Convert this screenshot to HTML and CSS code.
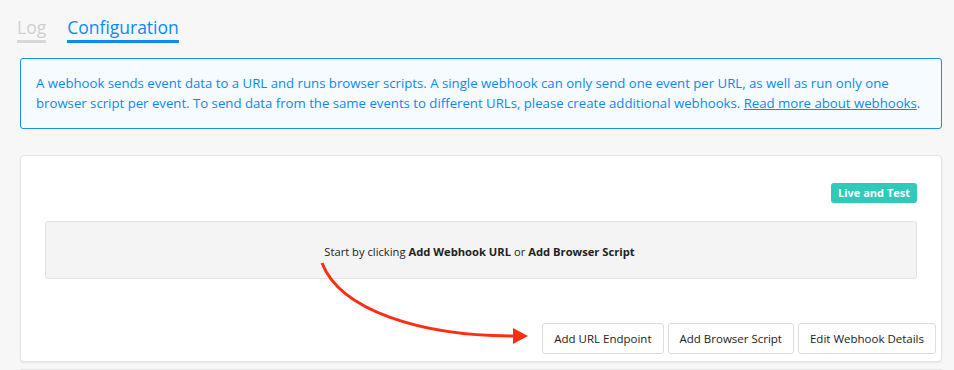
FILE: index.html
```html
<!DOCTYPE html>
<html lang="en">
<head>
  <meta charset="UTF-8" />
  <title>Webhook Configuration</title>
  <link rel="stylesheet" href="styles.css">
</head>
<body>
  <div class="tabs">
    <a class="tab">Log</a>
    <a class="tab active">Configuration</a>
  </div>

  <div class="info">
    A webhook sends event data to a URL and runs browser scripts. A single webhook can only send one event per URL, as well as run only one
    browser script per event. To send data from the same events to different URLs, please create additional webhooks. <a href="#">Read more about webhooks</a>.
  </div>

  <div class="card">
    <div class="card-top">
      <span class="badge">Live and Test</span>
    </div>
    <div class="empty">
      Start by clicking <strong>Add Webhook URL</strong> or <strong>Add Browser Script</strong>
    </div>
    <div class="actions">
      <button>Add URL Endpoint</button>
      <button>Add Browser Script</button>
      <button>Edit Webhook Details</button>
    </div>
    <svg class="arrow" width="240" height="100" viewBox="300 250 240 100">
      <path d="M322,263 C340,310 420,336 514,336" fill="none" stroke="#ff2d14" stroke-width="3" />
      <polygon points="513,328 528,336 513,344" fill="#ff2d14" />
    </svg>
  </div>

  <div class="card next"></div>
</body>
</html>
```

FILE: styles.css
```css
html {
  overflow: hidden;
}
body {
  margin: 0;
  padding: 0 12px 0 20px;
  background: #f7f7f7;
  font-family: 'Open Sans', sans-serif;
  overflow: hidden;
}
.tabs {
  display: flex;
  gap: 21px;
  padding: 14px 0 0 0;
  margin-left: -3px;
}
.tab {
  font-size: 17.5px;
  font-weight: 500;
  line-height: 26px;
  color: #d0d0d0;
  border-bottom: 3px solid #d8d8d8;
}
.tab.active {
  color: #0a8af4;
  border-color: #0a8af4;
}
.info {
  margin-top: 15px;
  padding: 14px 6px 15px 15px;
  background: #f5fbff;
  border: 1px solid #1b8ef2;
  border-radius: 3px;
  color: #0a8af4;
  font-size: 13.2px;
  line-height: 20px;
}
.info a {
  color: #0a8af4;
}
.card {
  position: relative;
  margin-top: 26px;
  background: #fff;
  border: 1px solid #e4e4e4;
  border-radius: 4px;
  box-shadow: 0 1px 2px rgba(0, 0, 0, 0.08);
  padding: 27px 5px 7px 24px;
}
.card-top {
  display: flex;
  justify-content: flex-end;
  padding-right: 19px;
}
.badge {
  background: #2ecbbb;
  color: #fff;
  font-size: 11px;
  font-weight: bold;
  line-height: 20px;
  padding: 0 7px;
  border-radius: 3px;
}
.empty {
  margin: 18px 19px 0 0;
  height: 54px;
  background: #f4f4f4;
  border: 1px solid #e2e2e2;
  border-radius: 3px;
  display: flex;
  align-items: center;
  justify-content: center;
  font-size: 11.2px;
  color: #222;
  padding-top: 2px;
  box-sizing: content-box;
}
.empty strong {
  margin: 0 3px;
}
.actions {
  display: flex;
  justify-content: flex-end;
  gap: 4px;
  margin-top: 44px;
}
.actions button {
  background: #fff;
  border: 1px solid #ddd;
  border-radius: 3px;
  height: 31px;
  padding: 0 11px;
  font-family: 'Open Sans', sans-serif;
  font-size: 11.5px;
  color: #222;
}
.arrow {
  position: absolute;
  left: 279px;
  top: 94px;
}
.card.next {
  margin-top: 7px;
  height: 0;
  padding: 0;
}
```
